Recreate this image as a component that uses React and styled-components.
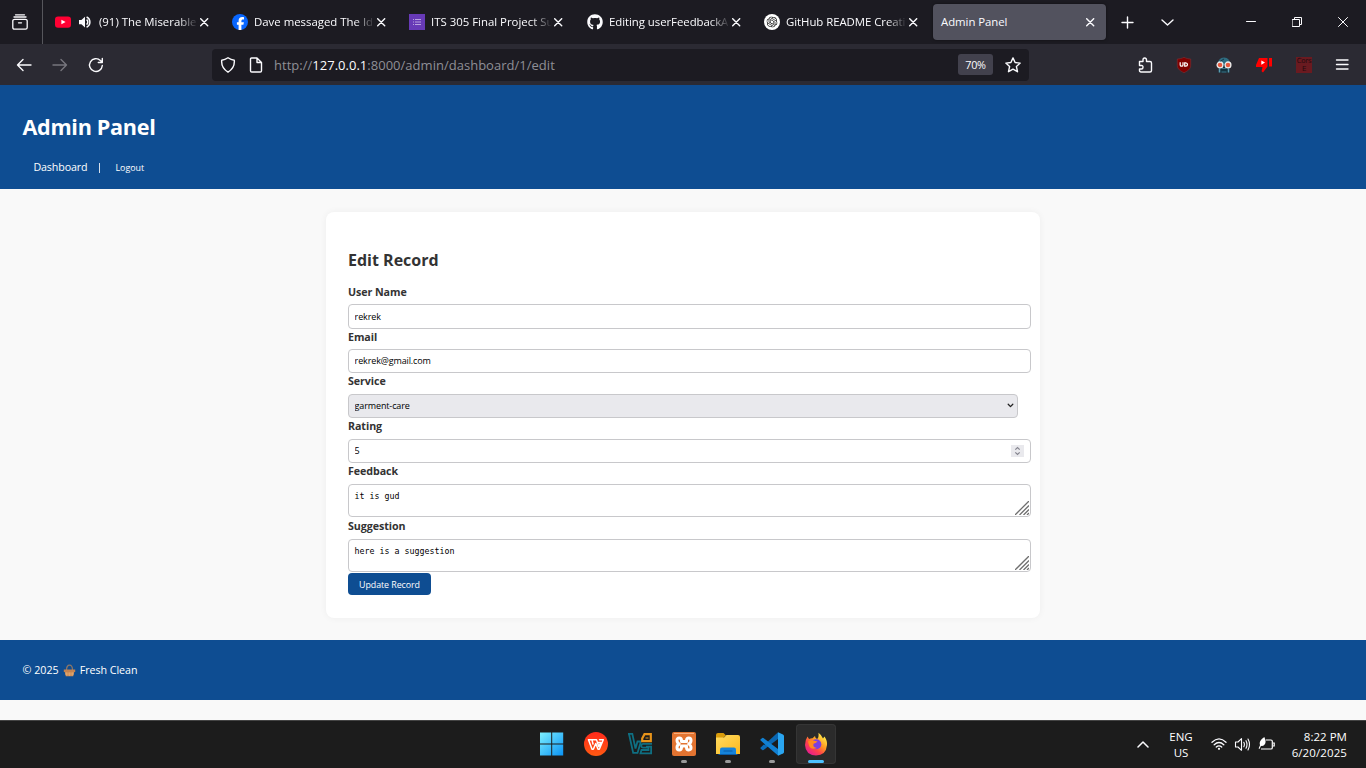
import React from "react";
import styled, { createGlobalStyle } from "styled-components";
import { FaGithub } from "react-icons/fa";
import { SiOpenai } from "react-icons/si";

const Global = createGlobalStyle`
  * { box-sizing: border-box; }
  html, body, #root { margin: 0; height: 100%; }
  body { overflow: hidden; font-family: "Open Sans", "Noto Sans", sans-serif; background: #f9f9f9; }
  svg { display: block; flex: none; }
`;

const Screen = styled.div`
  width: 1366px;
  height: 768px;
  display: flex;
  flex-direction: column;
`;

const Label = styled.span`
  font-size: ${(p) => p.$size || 11.4}px;
  letter-spacing: ${(p) => p.$ls || 0}px;
  white-space: nowrap;
`;

/* ---------- browser tab strip ---------- */
const TabStrip = styled.div`
  height: 44px;
  flex: none;
  display: flex;
  align-items: center;
  background: #1c1b22;
  color: #fbfbfe;
`;
const OverviewButton = styled.div`
  width: 43px;
  height: 44px;
  padding: 14px 0 0 12px;
  border-right: 1px solid #56565c;
  margin-right: 4px;
`;
const Tab = styled.div`
  width: 173px;
  height: 36px;
  margin-right: ${(p) => p.$gap || 4}px;
  padding: 0 11px 0 8px;
  border-radius: 4px;
  display: flex;
  align-items: center;
  background: ${(p) => (p.$active ? "#52525e" : "transparent")};
  box-shadow: ${(p) => (p.$active ? "0 0 3px rgba(0,0,0,.5)" : "none")};
`;
const TabTitle = styled(Label)`
  flex: 1;
  min-width: 0;
  margin-left: ${(p) => (p.$plain ? 0 : 6)}px;
  line-height: 20px;
  mask-image: ${(p) => (p.$plain ? "none" : "linear-gradient(to left, transparent 2px, #000 22px)")};
`;
const SoundIcon = styled.span`
  margin: 0 1px 0 7px;
`;
const StripButton = styled.div`
  width: ${(p) => p.$w}px;
  height: 36px;
  display: flex;
  align-items: center;
  justify-content: center;
`;
const WindowControls = styled.div`
  margin-left: auto;
  display: flex;
`;

/* ---------- browser toolbar ---------- */
const Toolbar = styled.div`
  height: 41px;
  flex: none;
  display: flex;
  align-items: center;
  padding: 0 16px;
  background: #2b2a33;
  color: #fbfbfe;
`;
const NavButtons = styled.div`
  display: flex;
  gap: 20px;
  width: 196px;
`;
const AddressBar = styled.div`
  width: 817px;
  height: 32px;
  border-radius: 4px;
  background: #1c1b22;
  display: flex;
  align-items: center;
  padding: 0 8px;
`;
const PageIcon = styled.span`
  margin-left: 12px;
`;
const Url = styled(Label)`
  margin-left: 10px;
  flex: 1;
  color: #8f8f96;
  b { font-weight: 400; color: #fbfbfe; }
`;
const Zoom = styled(Label)`
  width: 35px;
  height: 21px;
  line-height: 22px;
  border-radius: 3px;
  background: #42414d;
  text-align: center;
  margin-right: 12px;
`;
const Extensions = styled.div`
  margin-left: auto;
  display: flex;
  gap: 24px;
  & > :first-child { margin-right: -2px; }
  & > :last-child { margin-left: -2px; }
`;
const CorsBadge = styled.div`
  width: 16px;
  height: 16px;
  background: #6a1a20;
  color: #250b10;
  font-size: 7px;
  line-height: 8px;
  text-align: center;
  font-family: "DejaVu Sans", sans-serif;
  letter-spacing: -0.3px;
`;

/* ---------- page ---------- */
const Page = styled.div`
  flex: 1;
  background: #f9f9f9;
  display: flex;
  flex-direction: column;
`;
const Header = styled.header`
  height: 104px;
  background: #0e4d92;
  color: #fff;
  padding: 27px 22px 0;
`;
const Title = styled.h1`
  margin: 0 0 0 0.5px;
  font-size: 21.6px;
  line-height: 30px;
  letter-spacing: -0.3px;
`;
const Nav = styled.nav`
  display: flex;
  align-items: center;
  height: 16px;
  margin-top: 17px;
  padding-left: 11.4px;
`;
const Divider = styled.i`
  width: 1px;
  height: 10px;
  margin: 1px 15px 0 12px;
  background: #d5dfea;
`;
const Card = styled.main`
  width: 714px;
  height: 406px;
  margin: 23px auto 22px;
  padding: 36px 22px 0;
  border-radius: 8px;
  background: #fff;
  box-shadow: 0 0 7px rgba(0, 0, 0, 0.05);
  color: #333;
`;
const Heading = styled.h2`
  margin: 0 0 12px;
  font-size: 16px;
  line-height: 24px;
`;
const Field = styled.div`
  height: ${(p) => p.$h}px;
  width: ${(p) => p.$w || 683}px;
  padding-top: ${(p) => p.$pt || 0}px;
  display: flex;
  flex-direction: column;
  justify-content: space-between;
`;
const FieldLabel = styled.label`
  font-size: 10.7px;
  font-weight: 700;
  line-height: 16px;
  letter-spacing: -0.07px;
`;
const Control = styled.div`
  position: relative;
  height: ${(p) => p.$h || 24}px;
  border: 1px solid #c8c8cb;
  border-radius: 4px;
  background: ${(p) => (p.$shade ? "#e9e9ed" : "#fff")};
  display: flex;
  align-items: center;
  input, textarea, select {
    appearance: none;
    border: 0;
    outline: 0;
    background: transparent;
    width: 100%;
    height: 100%;
    padding: 0 6px 1px 5.6px;
    color: #000;
    font: 9px "Open Sans", "Noto Sans", sans-serif;
    letter-spacing: -0.13px;
  }
  textarea {
    resize: none;
    overflow: hidden;
    padding-top: 6px;
    letter-spacing: 0;
    font: 8.3px/11px "DejaVu Sans Mono", monospace;
  }
`;
const Corner = styled.span`
  position: absolute;
  right: ${(p) => p.$r}px;
  bottom: ${(p) => p.$b}px;
`;
const Submit = styled.button`
  display: block;
  width: 83px;
  height: 22px;
  margin-top: 1px;
  padding: 0;
  border: 0;
  border-radius: 4px;
  background: #0e4d92;
  color: #fff;
  font: 8.9px "Open Sans", "Noto Sans", sans-serif;
  letter-spacing: -0.08px;
`;
const Footer = styled.footer`
  height: 60px;
  background: #0e4d92;
  color: #fff;
  display: flex;
  align-items: center;
  padding-left: 22.6px;
  gap: 4px;
`;

/* ---------- taskbar ---------- */
const Taskbar = styled.div`
  height: 48px;
  flex: none;
  border-top: 1px solid #444;
  background: #1c1c1c;
  display: flex;
  align-items: center;
  color: #fff;
`;
const Apps = styled.div`
  display: flex;
  gap: 4px;
  margin-left: 532px;
  padding-bottom: 1px;
`;
const AppButton = styled.div`
  position: relative;
  width: 40px;
  height: 40px;
  display: flex;
  align-items: center;
  justify-content: center;
  border-radius: 4px;
  background: ${(p) => (p.$active ? "#2b2b2b" : "transparent")};
  box-shadow: ${(p) => (p.$active ? "inset 0 0 0 1px #353535" : "none")};
`;
const Indicator = styled.i`
  position: absolute;
  bottom: 1px;
  left: 50%;
  transform: translateX(-50%);
  width: ${(p) => (p.$active ? 16 : 6)}px;
  height: 3px;
  border-radius: 2px;
  background: ${(p) => (p.$active ? "#4cc2ff" : "#9a9a9a")};
`;
const Tray = styled.div`
  margin-left: auto;
  margin-right: 19px;
  display: flex;
  align-items: center;
`;
const TrayText = styled.div`
  display: flex;
  flex-direction: column;
  align-items: ${(p) => p.$align};
  width: ${(p) => p.$w}px;
  margin-left: ${(p) => p.$ml}px;
  line-height: 16px;
`;
const TrayIcons = styled.div`
  display: flex;
  align-items: center;
  gap: 7px;
  margin-left: 15px;
  padding-bottom: 1px;
`;

/* ---------- icons ---------- */
const Line = ({ d, s = 16, w = 1.4, color = "#fbfbfe", children, ...rest }) => (
  <svg width={s} height={s} viewBox={`0 0 ${s} ${s}`} fill="none" stroke={color} strokeWidth={w} strokeLinecap="round" strokeLinejoin="round" {...rest}>
    {d && <path d={d} />}
    {children}
  </svg>
);
const Close = () => <Line s={9} w={1.4} d="M.7.7 7.700 7.700M7.700.7.7 7.700" />;

const YouTube = () => (
  <svg width="16" height="16" viewBox="0 0 16 16">
    <rect y="2.4" width="16" height="11.3" rx="3" fill="#ff0033" />
    <path d="M6.4 5.7 10.6 8 6.4 10.3z" fill="#fff" />
  </svg>
);
const Speaker = () => (
  <svg width="14" height="14" viewBox="0 0 14 14" fill="#fbfbfe">
    <path d="M1 5h2.4L7 1.8v10.6L3.4 9.2H1z" />
    <path d="M8.6 4.6a3.2 3.2 0 0 1 0 5M8.6 2a5.6 5.6 0 0 1 0 10.2" fill="none" stroke="#fbfbfe" strokeWidth="1.5" />
  </svg>
);
const Facebook = () => (
  <svg width="16" height="16" viewBox="0 0 16 16">
    <circle cx="8" cy="8" r="8" fill="#0866ff" />
    <path d="M6.6 16v-5.3H4.9V8.2h1.7V7.1c0-2.7 1.2-4 3.8-4 .5 0 1.2.1 1.6.2v2.2h-.9c-1.3 0-1.7.5-1.7 1.7v1h2.5l-.5 2.5h-2V16z" fill="#fff" />
  </svg>
);
const FormsIcon = () => (
  <svg width="16" height="16" viewBox="0 0 16 16">
    <rect width="16" height="16" fill="#673ab7" />
    <path d="M4 5.5h1M4 8h1M4 10.500h1M6 5.500h6M6 8h6M6 10.500h6" stroke="#b9a2e0" strokeWidth="1.2" />
  </svg>
);
const GptIcon = () => (
  <svg width="16" height="16" viewBox="0 0 16 16">
    <circle cx="8" cy="8" r="8" fill="#fff" />
    <SiOpenai x="2.5" y="2.5" size={11} color="#111" />
  </svg>
);
const Ublock = () => (
  <svg width="16" height="16" viewBox="0 0 16 16">
    <path d="M8 .3c2 1 4.500 1.700 6.700 1.700v6.300c0 3.800-3.200 5.800-6.700 7.400C4.500 14.100 1.300 12.100 1.300 8.300V2C3.500 2 6 1.300 8 .3z" fill="#800000" stroke="#7d3035" strokeWidth=".6" />
    <path d="M4.200 5.200v2.700q0 1.300 1.400 1.300t1.400-1.300V5.200" fill="none" stroke="#fff" strokeWidth="1.200" />
    <path d="M8.700 5.800h1q1.800.1 1.800 1.700t-1.800 1.700h-1z" fill="none" stroke="#fff" strokeWidth="1.200" />
  </svg>
);
const Bot = () => (
  <svg width="16" height="16" viewBox="0 0 16 16">
    <path d="M2 8C1.800 3.500 4 .6 8 .6S14.200 3.500 14 8z" fill="#2f6c80" />
    <path d="M2.500 9h11v6.500h-11z" fill="#15323e" />
    <path d="M3.500 15.500V11.500M12.500 15.500V11.500" stroke="#5b9cb2" strokeWidth="1.500" />
    <path d="M6 11.500h4M5.500 15h5" stroke="#39758a" strokeWidth="1" />
    <circle cx="4" cy="7.900" r="2.900" fill="#e6583e" stroke="#ececec" strokeWidth="1.300" />
    <circle cx="12" cy="7.900" r="2.900" fill="#e6583e" stroke="#ececec" strokeWidth="1.300" />
    <path d="M4.500 4.200 8 2" stroke="#17394a" />
  </svg>
);
const Dislike = () => (
  <svg width="16" height="16" viewBox="0 0 16 16">
    <path d="M3 1h8.500v8.500L7 15.500l-1.400-1.300L6.500 10H0V8z M13 1h3v8.500h-3z" fill="#f00" />
    <path d="M5.300 3.500 9 5.600 5.300 7.700z" fill="#fff" />
  </svg>
);
const Spinner = () => (
  <svg width="13" height="12" viewBox="0 0 13 12">
    <rect width="13" height="12" fill="#e9e9ed" />
    <path d="M4.300 4.700 6.500 2.500 8.700 4.700M4.300 7.300 6.500 9.500 8.700 7.300" fill="none" stroke="#85858f" strokeWidth="1.200" />
  </svg>
);
const Grip = () => (
  <svg width="14" height="14" viewBox="0 0 14 14">
    <path d="M0 14 14 0M4.500 14 14 4.500M8.500 14 14 8.500M12 14l2-2" stroke="#6f6f6f" strokeWidth="1.300" />
  </svg>
);
const Basket = () => (
  <svg width="13" height="13" viewBox="0 0 13 13">
    <path d="M3.500 6C3.500-.6 9.500-.6 9.500 6" fill="none" stroke="#8d7768" strokeWidth="1.200" />
    <path d="M1.500 7h10l-1.300 5.300H2.800z" fill="#d09058" />
    <path d="M.8 5.500h11.400V8H.8z" fill="#c58350" />
    <path d="M3.500 8.500v3M6.500 8.500v3.500M9.500 8.500v3M2 10h9" stroke="#e2aa74" strokeWidth=".7" />
  </svg>
);

const Windows = () => (
  <svg width="24" height="24" viewBox="0 0 24 24">
    <defs>
      <linearGradient id="win" x1="0" y1="0" x2="1" y2="1">
        <stop offset="0" stopColor="#7df0ff" />
        <stop offset="1" stopColor="#0a93f5" />
      </linearGradient>
    </defs>
    <path d="M0 .5h11.200v11H0zM12.200.5H23.200v11H12.200zM0 12.500h11.200v11H0zM12.200 12.500H23.200v11H12.200z" fill="url(#win)" />
  </svg>
);
const Wps = () => (
  <svg width="24" height="24" viewBox="0 0 24 24">
    <defs>
      <linearGradient id="wps" x1="0" y1="0" x2="0" y2="1">
        <stop offset="0" stopColor="#ff2a1c" />
        <stop offset="1" stopColor="#ff5a12" />
      </linearGradient>
    </defs>
    <circle cx="12" cy="12" r="12" fill="url(#wps)" />
    <path d="M4.500 7.800H12.500L14.800 14.500 16.800 10.500H13.800M4.500 7.800 8 17.300H9.300L11.800 11.500 14 17.300H15.300L19.300 7.800H15.500M8 7.800 9 12" fill="none" stroke="#fff" strokeWidth="1.500" strokeLinejoin="round" strokeLinecap="round" />
  </svg>
);
const VbIcon = () => (
  <svg width="24" height="24" viewBox="0 0 24 24" fill="none" strokeWidth="1.800">
    <path d="M0 1.900H4.300L7.500 16.500 9.500 9.500H12.500V11L9.500 20.900H5.200L1 2" stroke="#0f6f82" />
    <path d="M24 11.900H15.200Q13.300 11.900 13.300 13.800T15.200 15.700H20.500V18H13.500L12.500 21.300H23.100V14.700H18" stroke="#0f6f82" />
    <path d="M14.200 9.200V6.500L16.500 2.200H22.800V9.200z" stroke="#e8941a" strokeWidth="2.200" />
    <path d="M17.500 6h3" stroke="#e8941a" strokeWidth="1" />
  </svg>
);
const Xampp = () => (
  <svg width="24" height="24" viewBox="0 0 24 24">
    <rect width="24" height="24" rx="2" fill="#e37431" />
    <path d="M2 1.500h20" stroke="#f6ad7c" />
    <path d="M12 9.500H9.500V8.500Q9.500 6 7.200 6T5 8.500 7.300 12Q5 13 5 15.500T7.200 18 9.500 15.500V14h5v1.500Q14.500 18 16.800 18T19 15.500 16.700 12Q19 11 19 8.500T16.800 6 14.500 8.500v1z" fill="none" stroke="#fff" strokeWidth="3" strokeLinejoin="round" />
  </svg>
);
const Folder = () => (
  <svg width="24" height="24" viewBox="0 0 24 24">
    <defs>
      <linearGradient id="fold" x1="0" y1="0" x2="1" y2="1">
        <stop offset="0" stopColor="#ffdc62" />
        <stop offset="1" stopColor="#fbb81d" />
      </linearGradient>
    </defs>
    <path d="M0 3Q0 1 2 1H7.500L10 3.500 7 6H0z" fill="#d99c0b" />
    <path d="M0 5.500H8L10.500 3H22q2 0 2 2V22H0z" fill="url(#fold)" />
    <path d="M4 22.500V17.500Q4 15.500 6 15.500H18q2 0 2 2v5z" fill="#1583d9" />
    <path d="M8 19h8M3 22.500H21" stroke="#0a5aa5" strokeWidth="1.200" strokeLinecap="round" />
  </svg>
);
const VsCode = () => (
  <svg width="24" height="24" viewBox="0 0 24 24">
    <path d="M1 15.800 3 17.500Q3.500 17.800 4 17.500L18 7V.3z" fill="#0a66b0" />
    <path d="M.7 8.600Q0 8 .7 7.300L2.300 6Q2.800 5.600 3.400 6L18 17v6.500z" fill="#1180d2" />
    <path d="M.7 15.400Q0 16 .7 16.700L2.300 18Q2.800 18.400 3.400 18L6.500 15.600 3.800 12.600z" fill="#0a6cba" />
    <path d="M18 .2 23 2.600Q24 3.100 24 4.100V19.900Q24 20.900 23 21.400L18 23.800V.2z" fill="#2aa5f0" />
  </svg>
);
const Firefox = () => (
  <svg width="24" height="24" viewBox="0 0 24 24">
    <defs>
      <linearGradient id="ffx" x1=".85" y1=".1" x2=".2" y2=".9">
        <stop offset="0" stopColor="#fff04a" />
        <stop offset=".4" stopColor="#ff9a22" />
        <stop offset=".7" stopColor="#ff4249" />
        <stop offset="1" stopColor="#e8208a" />
      </linearGradient>
    </defs>
    <path d="M3.500 4.500 5 7Q7 6 8.500 6.200L11 4Q11 6 13 7 15 6 14.500.8 17.500 3 19 6.500L20.500 4.500Q23.500 9 23 13 22 23.500 12 23.500 1.500 23 1 13 1 8 3.500 4.500z" fill="url(#ffx)" />
    <circle cx="12.300" cy="12.300" r="5" fill="#7a3fe0" />
    <path d="M4 9.500Q7 7.500 9.500 8.500L13.500 9.500Q12 11.500 9.500 11.800 8.500 15.500 13 16 7 18.500 5 13.500z" fill="#ff8a1e" />
  </svg>
);
const Wifi = () => (
  <Line s={16} w={1.3} d="M1 6.200Q8-.4 15 6.200M3.200 8.700Q8 4.300 12.800 8.700M5.300 11.100Q8 8.700 10.700 11.100">
    <circle cx="8" cy="12.800" r="1.100" fill="#fff" stroke="none" />
  </Line>
);
const Volume = () => (
  <Line s={17} w={1.1} d="M1.500 6H4L7.500 2.700V14.300L4 11H1.500zM9.800 6.200q1.200 2.300 0 4.600M12 4.700q2 3.800 0 7.600M14 3q3 5.500 0 11" />
);
const Battery = () => (
  <svg width="17" height="14" viewBox="0 0 17 14">
    <path d="M8 3H13Q14.300 3 14.300 4.300V10.700Q14.300 12 13 12H3M15 6h1.200v3H15" fill="none" stroke="#fff" strokeWidth="1.200" />
    <path d="M6.300 0Q9 5.500 6 8.300 4.500 9.300 3 8.800L1.500 12 .6 11.500 2 8.300Q.3 4 6.300 0z" fill="#fff" />
  </svg>
);

const tabs = [
  { icon: <YouTube />, title: "(91) The Miserable", sound: true },
  { icon: <Facebook />, title: "Dave messaged The Id" },
  { icon: <FormsIcon />, title: "ITS 305 Final Project Su", gap: 5 },
  { icon: <FaGithub size={16} />, title: "Editing userFeedbackA", ls: -0.05 },
  { icon: <GptIcon />, title: "GitHub README Creati", ls: -0.05 },
];

export default function App() {
  return (
    <Screen>
      <Global />
      <TabStrip>
        <OverviewButton>
          <Line d="M3.500.8h9M2.800 5.300h10.400Q15.200 5.300 15.200 6.800V13.500Q15.200 15.200 13.500 15.200H2.500Q.8 15.200.8 13.500V6.800Q.8 5.300 2.800 5.300M6.500 8.800h3M2 3h12" w={1.3} />
        </OverviewButton>
        {tabs.map((t) => (
          <Tab key={t.title} $gap={t.gap}>
            {t.icon}
            {t.sound && <SoundIcon><Speaker /></SoundIcon>}
            <TabTitle $ls={t.ls}>{t.title}</TabTitle>
            <Close />
          </Tab>
        ))}
        <Tab $active $gap={1}>
          <TabTitle $plain $ls={-0.05}>Admin Panel</TabTitle>
          <Close />
        </Tab>
        <StripButton $w={40}><Line s={13} w={1.4} d="M6.500 1v11M1 6.500h11" /></StripButton>
        <StripButton $w={41}><Line s={13} w={1.4} d="M1 4l5.500 5L12 4" /></StripButton>
        <WindowControls>
          <StripButton $w={46}><Line s={10} w={1} d="M.5 4.500h9" /></StripButton>
          <StripButton $w={46}><Line s={10} w={1} d="M.5 2.500h7v7h-7zM2.500 2V.5h7V7.500H8" /></StripButton>
          <StripButton $w={46}><Line s={10} w={1} d="M.5.5l9 9M9.500.5l-9 9" /></StripButton>
        </WindowControls>
      </TabStrip>

      <Toolbar>
        <NavButtons>
          <Line d="M15 8H1.500M7 2.500 1.500 8 7 13.500" />
          <Line color="#77767e" d="M1 8h13.500M9 2.500 14.500 8 9 13.500" />
          <Line d="M14.300 8.500A6.400 6.400 0 1 1 12.400 3.500L14 5M14.300 1.500V5.500H10.300" />
        </NavButtons>
        <AddressBar>
          <Line d="M8 .8Q11 3 14.300 3.200 15 11 8 15.200 1 11 1.700 3.200 5 3 8 .8z" />
          <PageIcon>
            <Line d="M3.500 1H9L13.500 5.500V13.700Q13.500 15 12.200 15H3.800Q2.500 15 2.500 13.700V2Q2.500 1 3.500 1zM9 1V5.500H13.500" />
          </PageIcon>
          <Url $size={13} $ls={0.02}>http://<b>127.0.0.1</b>:8000/admin/dashboard/1/edit</Url>
          <Zoom $size={10.8} $ls={-0.2}>70%</Zoom>
          <Line d="M8 .9 10.100 5.500 15.200 6.100 11.400 9.500 12.500 14.700 8 12.100 3.500 14.700 4.600 9.500.8 6.100 5.900 5.500z" />
        </AddressBar>
        <Extensions>
          <Line d="M1.500 4.500H5V3Q5 1 6.700 1T8.500 3V4.500H12Q13.500 4.500 13.500 6V13.500Q13.500 15 12 15H3Q1.500 15 1.500 13.500V12H3.500Q5 12 5 10.200T3.500 8.500H1.500z" />
          <Ublock />
          <Bot />
          <Dislike />
          <CorsBadge>Cors<br />E</CorsBadge>
          <Line w={1.400} d="M2.500 3h11.500M2.500 7.500h11.500M2.500 12h11.500" />
        </Extensions>
      </Toolbar>

      <Page>
        <Header>
          <Title>Admin Panel</Title>
          <Nav>
            <Label $size={10.7} $ls={-0.12}>Dashboard</Label>
            <Divider />
            <Label $size={8.9}>Logout</Label>
          </Nav>
        </Header>
        <Card>
          <Heading>Edit Record</Heading>
          <Field $h={45}>
            <FieldLabel>User Name</FieldLabel>
            <Control $h={25}><input defaultValue="rekrek" /></Control>
          </Field>
          <Field $h={44}>
            <FieldLabel>Email</FieldLabel>
            <Control><input defaultValue="rekrek@gmail.com" /></Control>
          </Field>
          <Field $h={45} $w={670}>
            <FieldLabel>Service</FieldLabel>
            <Control $shade>
              <select defaultValue="garment-care"><option>garment-care</option></select>
              <Corner $r={3} $b={8}><Line s={7} w={1.300} color="#222" d="M1.200 2.300l2.300 2.300 2.300-2.300" /></Corner>
            </Control>
          </Field>
          <Field $h={45}>
            <FieldLabel>Rating</FieldLabel>
            <Control>
              <input defaultValue="5" />
              <Corner $r={6} $b={5}><Spinner /></Corner>
            </Control>
          </Field>
          <Field $h={54}>
            <FieldLabel>Feedback</FieldLabel>
            <Control $h={33}>
              <textarea defaultValue="it is gud" />
              <Corner $r={1} $b={1}><Grip /></Corner>
            </Control>
          </Field>
          <Field $h={55} $pt={1}>
            <FieldLabel>Suggestion</FieldLabel>
            <Control $h={33}>
              <textarea defaultValue="here is a suggestion" />
              <Corner $r={1} $b={1}><Grip /></Corner>
            </Control>
          </Field>
          <Submit>Update Record</Submit>
        </Card>
        <Footer>
          <Label $size={10.7}>© 2025</Label>
          <Basket />
          <Label $size={10.7} $ls={-0.05}>Fresh Clean</Label>
        </Footer>
      </Page>

      <Taskbar>
        <Apps>
          <AppButton><Windows /></AppButton>
          <AppButton><Wps /></AppButton>
          <AppButton><VbIcon /></AppButton>
          <AppButton><Xampp /><Indicator /></AppButton>
          <AppButton><Folder /><Indicator /></AppButton>
          <AppButton><VsCode /><Indicator /></AppButton>
          <AppButton $active><Firefox /><Indicator $active /></AppButton>
        </Apps>
        <Tray>
          <Line s={12} w={1.500} d="M1 8 6 3 11 8" />
          <TrayText $align="center" $w={30} $ml={17}>
            <Label $size={11.5}>ENG</Label>
            <Label $size={11.5}>US</Label>
          </TrayText>
          <TrayIcons><Wifi /><Volume /><Battery /></TrayIcons>
          <TrayText $align="flex-end" $w={58} $ml={14}>
            <Label $size={11.5} $ls={0.03}>8:22 PM</Label>
            <Label $size={11.5} $ls={0.1}>6/20/2025</Label>
          </TrayText>
        </Tray>
      </Taskbar>
    </Screen>
  );
}
